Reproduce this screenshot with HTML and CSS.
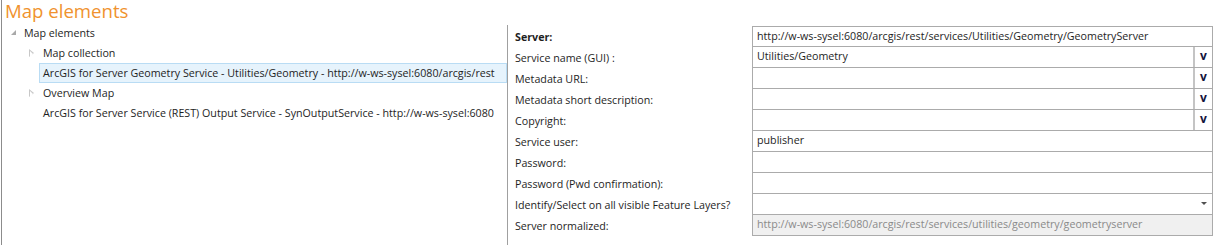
FILE: index.html
```html
<!DOCTYPE html>
<html>
<head>
<meta charset="utf-8">
<link rel="stylesheet" href="styles.css">
</head>
<body>
<div class="page">
  <h1 class="title">Map elements</h1>
  <div class="content">
    <div class="tree">
      <div class="row lvl0"><span class="tri-open"></span><span class="label">Map elements</span></div>
      <div class="row lvl1"><span class="tri-closed"></span><span class="label">Map collection</span></div>
      <div class="row lvl1 selected"><span class="tri-none"></span><span class="label">ArcGIS for Server Geometry Service - Utilities/Geometry - http://w-ws-sysel:6080/arcgis/rest</span></div>
      <div class="row lvl1"><span class="tri-closed"></span><span class="label">Overview Map</span></div>
      <div class="row lvl1"><span class="tri-none"></span><span class="label">ArcGIS for Server Service (REST) Output Service - SynOutputService - http://w-ws-sysel:6080</span></div>
    </div>
    <div class="form">
      <div class="lbl bold">Server:</div>
      <div class="field first"><span class="val">http://w-ws-sysel:6080/arcgis/rest/services/Utilities/Geometry/GeometryServer</span></div>

      <div class="lbl">Service name (GUI) :</div>
      <div class="field"><span class="val">Utilities/Geometry</span><span class="vbtn">v</span></div>

      <div class="lbl">Metadata URL:</div>
      <div class="field"><span class="val"></span><span class="vbtn">v</span></div>

      <div class="lbl">Metadata short description:</div>
      <div class="field"><span class="val"></span><span class="vbtn">v</span></div>

      <div class="lbl">Copyright:</div>
      <div class="field"><span class="val"></span><span class="vbtn">v</span></div>

      <div class="lbl">Service user:</div>
      <div class="field"><span class="val">publisher</span></div>

      <div class="lbl">Password:</div>
      <div class="field"><span class="val"></span></div>

      <div class="lbl">Password (Pwd confirmation):</div>
      <div class="field"><span class="val"></span></div>

      <div class="lbl">Identify/Select on all visible Feature Layers?</div>
      <div class="field"><span class="val"></span><span class="combo-arrow"></span></div>

      <div class="lbl">Server normalized:</div>
      <div class="field disabled"><span class="val">http://w-ws-sysel:6080/arcgis/rest/services/utilities/geometry/geometryserver</span></div>
    </div>
  </div>
</div>
</body>
</html>
```

FILE: styles.css
```css
html, body {
  margin: 0;
  padding: 0;
  background: #ffffff;
}
body {
  font-family: "Open Sans", "Noto Sans", "DejaVu Sans", sans-serif;
  font-size: 10.7px;
  color: #1e1e1e;
  width: 1215px;
  height: 245px;
  overflow: hidden;
}
.page {
  margin-left: 1px;
  border-left: 1px solid #8c8c8c;
  height: 245px;
  display: flex;
  flex-direction: column;
}
.title {
  margin: 0;
  padding-left: 3px;
  height: 23px;
  line-height: 21px;
  font-size: 18.6px;
  font-weight: normal;
  color: #f0922e;
}
.content {
  display: flex;
  flex: 1;
}
.tree {
  width: 505px;
  flex: none;
}
.row {
  height: 20px;
  display: flex;
  align-items: center;
  white-space: nowrap;
}
.lvl0 { padding-left: 9px; }
.lvl1 { padding-left: 26px; }
.tri-open {
  width: 11px;
  height: 20px;
  position: relative;
  flex: none;
}
.tri-open::before {
  content: "";
  position: absolute;
  left: 0;
  top: 7px;
  width: 0;
  height: 0;
  border-left: 5px solid transparent;
  border-bottom: 5px solid #a9a9a9;
}
.tri-closed {
  width: 13px;
  height: 20px;
  position: relative;
  flex: none;
}
.tri-closed::before {
  content: "";
  position: absolute;
  left: 1px;
  top: 6px;
  width: 0;
  height: 0;
  border-top: 4.5px solid transparent;
  border-bottom: 4.5px solid transparent;
  border-left: 5px solid #c8c8c8;
}
.tri-closed::after {
  content: "";
  position: absolute;
  left: 2px;
  top: 7.5px;
  width: 0;
  height: 0;
  border-top: 3px solid transparent;
  border-bottom: 3px solid transparent;
  border-left: 3px solid #ffffff;
}
.tri-none {
  width: 13px;
  flex: none;
}
.label {
  padding-left: 2px;
}
.selected .label {
  background: #e6f3fc;
  border: 1px solid #b9dcf4;
  height: 18px;
  line-height: 18px;
  padding-left: 3px;
  margin-left: -2px;
  flex: 1;
}
.form {
  margin-top: 2px;
  padding-top: 1px;
  border-left: 1px solid #a0a0a0;
  padding-left: 7px;
  flex: 1;
  display: grid;
  grid-template-columns: 237px 461px;
  align-content: start;
}
.lbl {
  height: 21px;
  line-height: 22px;
  white-space: nowrap;
}
.bold { font-weight: bold; }
.field {
  height: 22px;
  margin-top: -1px;
  box-sizing: border-box;
  border: 1px solid #ababab;
  display: flex;
  align-items: stretch;
  background: #ffffff;
}
.field.first { margin-top: 0; height: 21px; }
.val {
  flex: 1;
  padding-left: 4px;
  line-height: 19px;
  white-space: nowrap;
  overflow: hidden;
}
.vbtn {
  width: 17px;
  flex: none;
  border-left: 2px solid #c4c4c4;
  text-align: center;
  font-weight: bold;
  font-size: 12px;
  line-height: 18px;
  color: #14143c;
}
.combo-arrow {
  width: 16px;
  flex: none;
  position: relative;
}
.combo-arrow::before {
  content: "";
  position: absolute;
  left: 5px;
  top: 8px;
  border-left: 3px solid transparent;
  border-right: 3px solid transparent;
  border-top: 3px solid #505050;
}
.disabled {
  background: #f0f0f0;
}
.disabled .val {
  color: #8a8a8a;
}
```
